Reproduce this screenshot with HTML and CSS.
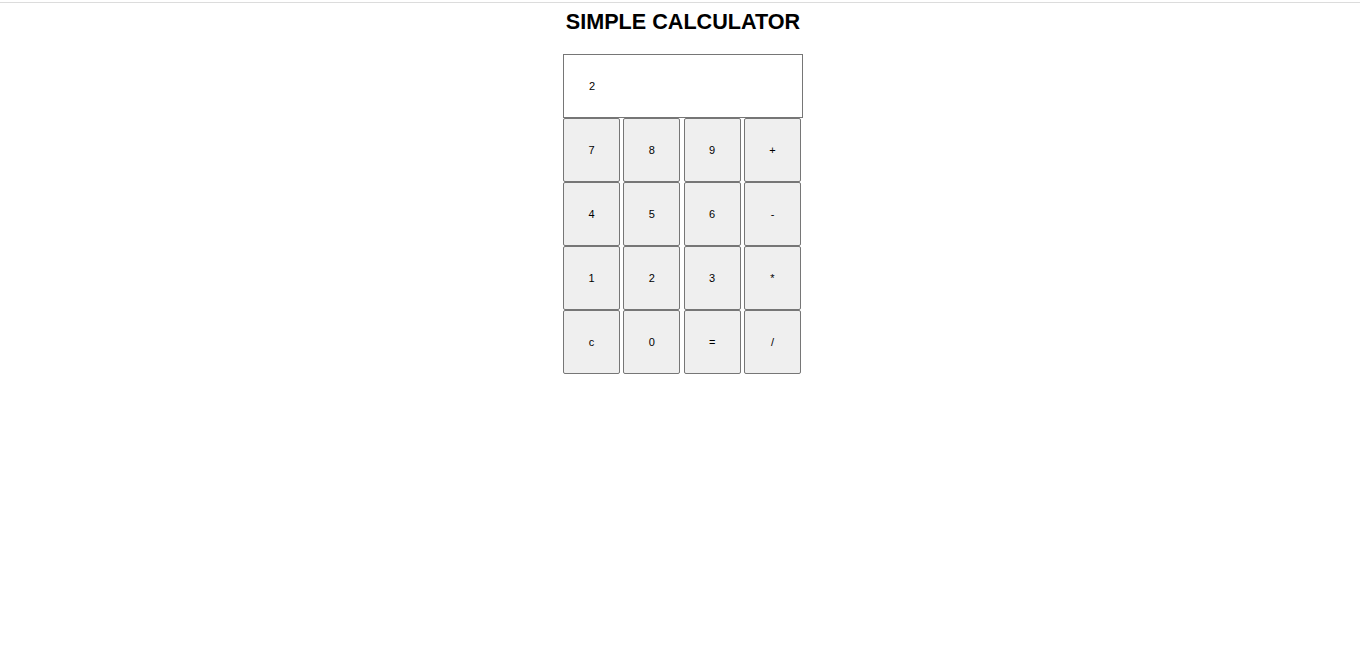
FILE: index.html
```html
<!DOCTYPE html>
<html>
<head>
<meta charset="utf-8">
<link rel="stylesheet" href="styles.css">
</head>
<body>
<div class="topline"></div>
<div class="page">
<h1 class="title">SIMPLE CALCULATOR</h1>
<div class="calc">
  <div class="display">2</div>
  <div class="row"><button class="key">7</button><button class="key">8</button><button class="key">9</button><button class="key">+</button></div>
  <div class="row"><button class="key">4</button><button class="key">5</button><button class="key">6</button><button class="key">-</button></div>
  <div class="row"><button class="key">1</button><button class="key">2</button><button class="key">3</button><button class="key">*</button></div>
  <div class="row"><button class="key">c</button><button class="key">0</button><button class="key">=</button><button class="key">/</button></div>
</div>
</div>
</body>
</html>
```
FILE: styles.css
```css
html, body {
  margin: 0;
  padding: 0;
  background: #ffffff;
  font-family: "Liberation Sans", Arial, sans-serif;
}
.topline {
  height: 1px;
  margin-top: 2px;
  background: #dcdcdc;
}
.page {
  padding-left: 6px;
}
.title {
  margin: 6px 0 0 0;
  text-align: center;
  font-size: 21.6px;
  line-height: 26px;
  font-weight: bold;
  color: #000;
}
.calc {
  width: 240px;
  margin: 19px auto 0 auto;
  display: flex;
  flex-direction: column;
}
.display {
  box-sizing: border-box;
  height: 64px;
  border: 1px solid #767676;
  padding-left: 25px;
  display: flex;
  align-items: center;
  font-size: 11px;
  color: #000;
}
.row {
  display: flex;
  gap: 3.33px;
}
.key {
  box-sizing: border-box;
  width: 57px;
  height: 64px;
  margin: 0;
  padding: 0;
  border: 1px solid #767676;
  border-radius: 2px;
  background: #efefef;
  font-family: "Liberation Sans", Arial, sans-serif;
  font-size: 11px;
  color: #000;
}
```
